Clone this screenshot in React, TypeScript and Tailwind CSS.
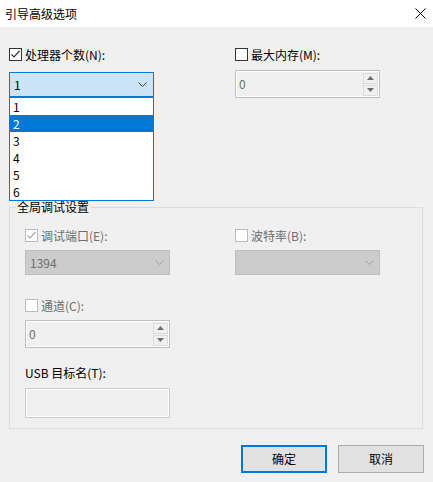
import React from 'react';

const font = { fontFamily: '"Noto Sans CJK SC", "Noto Sans", sans-serif' };

const Chevron = ({ color = '#404040' }: { color?: string }) => (
  <svg width="9" height="5" viewBox="0 0 9 5" className="shrink-0">
    <polyline points="0.5,0.5 4.5,4.5 8.5,0.5" fill="none" stroke={color} strokeWidth="1" />
  </svg>
);

const CheckBox = ({ checked, disabled }: { checked?: boolean; disabled?: boolean }) => (
  <span
    className={
      disabled
        ? 'w-[13px] h-[13px] border border-[#bcbcbc] bg-white flex items-center justify-center shrink-0'
        : 'w-[13px] h-[13px] border border-[#333333] bg-white flex items-center justify-center shrink-0'
    }
  >
    {checked && (
      <svg width="11" height="11" viewBox="0 0 11 11">
        <polyline
          points="1.5,5.5 4,8 9.5,2"
          fill="none"
          stroke={disabled ? '#a8a8a8' : '#333333'}
          strokeWidth="1.2"
        />
      </svg>
    )}
  </span>
);

const CheckRow = ({
  label,
  checked,
  disabled,
}: {
  label: string;
  checked?: boolean;
  disabled?: boolean;
}) => (
  <div className="flex items-center gap-[3px] h-[13px]">
    <CheckBox checked={checked} disabled={disabled} />
    <span className={disabled ? 'text-[12px] leading-none text-[#6d6d6d]' : 'text-[12px] leading-none text-black'}>
      {label}
    </span>
  </div>
);

const SpinBox = ({ value }: { value: string }) => (
  <div className="w-[145px] h-[28px] border border-[#bfbfbf] bg-[#f0f0f0] shadow-[inset_0_0_0_1px_#ffffff] flex items-center justify-between pl-[3px] pr-[1px]">
    <span className="text-[12px] leading-none text-[#6d6d6d]">{value}</span>
    <div className="flex flex-col gap-[1px]">
      <span className="w-[15px] h-[11px] border border-[#dcdcdc] flex items-center justify-center">
        <svg width="7" height="4" viewBox="0 0 7 4">
          <polygon points="0,4 3.5,0 7,4" fill="#6d6d6d" />
        </svg>
      </span>
      <span className="w-[15px] h-[11px] border border-[#dcdcdc] flex items-center justify-center">
        <svg width="7" height="4" viewBox="0 0 7 4">
          <polygon points="0,0 7,0 3.5,4" fill="#6d6d6d" />
        </svg>
      </span>
    </div>
  </div>
);

const DisabledCombo = ({ value }: { value?: string }) => (
  <div className="w-[145px] h-[25px] border border-[#bfbfbf] bg-[#cccccc] flex items-center justify-between pl-[4px] pr-[5px]">
    <span className="text-[12px] leading-none text-[#6d6d6d]">{value}</span>
    <Chevron color="#a0a0a0" />
  </div>
);

export default function App() {
  const items = ['1', '2', '3', '4', '5', '6'];

  return (
    <div className="relative w-[433px] h-[482px] bg-[#f0f0f0] text-black overflow-hidden" style={font}>
      {/* Title bar */}
      <div className="h-[27px] bg-white flex items-center justify-between pl-[5px] pr-[7px]">
        <span className="text-[12px] leading-none">引导高级选项</span>
        <svg width="11" height="11" viewBox="0 0 11 11">
          <path d="M0.5 0.5 L10.5 10.5 M10.5 0.5 L0.5 10.5" stroke="#000" strokeWidth="1" />
        </svg>
      </div>

      <div className="px-[9px]">
        {/* Top row */}
        <div className="flex gap-[81px] mt-[21px]">
          <div className="w-[145px] flex flex-col gap-[11px]">
            <CheckRow label="处理器个数(N):" checked />
            <div className="w-[145px] h-[25px] border border-[#0078d7] bg-[#cce4f7] flex items-center justify-between pl-[4px] pr-[6px]">
              <span className="text-[12px] leading-none">1</span>
              <Chevron />
            </div>
          </div>
          <div className="w-[145px] flex flex-col gap-[9px]">
            <CheckRow label="最大内存(M):" />
            <SpinBox value="0" />
          </div>
        </div>

        {/* Group box */}
        <div className="relative mt-[109px] w-[414px] h-[222px] border border-[#dcdcdc] pl-[15px] pt-[21px]">
          <span className="absolute left-[6px] -top-[8px] px-[1px] bg-[#f0f0f0] text-[12px] leading-[14px]">
            全局调试设置
          </span>
          <div className="flex gap-[65px]">
            <div className="flex flex-col gap-[8px]">
              <CheckRow label="调试端口(E):" checked disabled />
              <DisabledCombo value="1394" />
            </div>
            <div className="flex flex-col gap-[8px]">
              <CheckRow label="波特率(B):" disabled />
              <DisabledCombo />
            </div>
          </div>
          <div className="flex flex-col gap-[8px] mt-[24px]">
            <CheckRow label="通道(C):" disabled />
            <SpinBox value="0" />
          </div>
          <div className="mt-[19px] text-[12px] leading-none h-[12px]">USB 目标名(T):</div>
          <div className="mt-[9px] w-[145px] h-[30px] border border-[#cccccc] bg-[#f0f0f0] shadow-[inset_0_0_0_1px_#ffffff]" />
        </div>

        {/* Buttons */}
        <div className="flex justify-end gap-[11px] mt-[16px]">
          <button className="w-[86px] h-[28px] border-2 border-[#0078d7] bg-[#e1e1e1] text-[12px] leading-none">
            确定
          </button>
          <button className="w-[86px] h-[28px] border border-[#adadad] bg-[#e1e1e1] text-[12px] leading-none">
            取消
          </button>
        </div>
      </div>

      {/* Open dropdown list */}
      <div className="absolute left-[9px] top-[97px] w-[145px] border border-[#0078d7] bg-white">
        {items.map((it) => (
          <div
            key={it}
            className={
              it === '2'
                ? 'h-[17px] flex items-center pl-[3px] bg-[#0078d7] text-white text-[12px] leading-none'
                : 'h-[17px] flex items-center pl-[3px] text-black text-[12px] leading-none'
            }
          >
            {it}
          </div>
        ))}
      </div>
    </div>
  );
}
